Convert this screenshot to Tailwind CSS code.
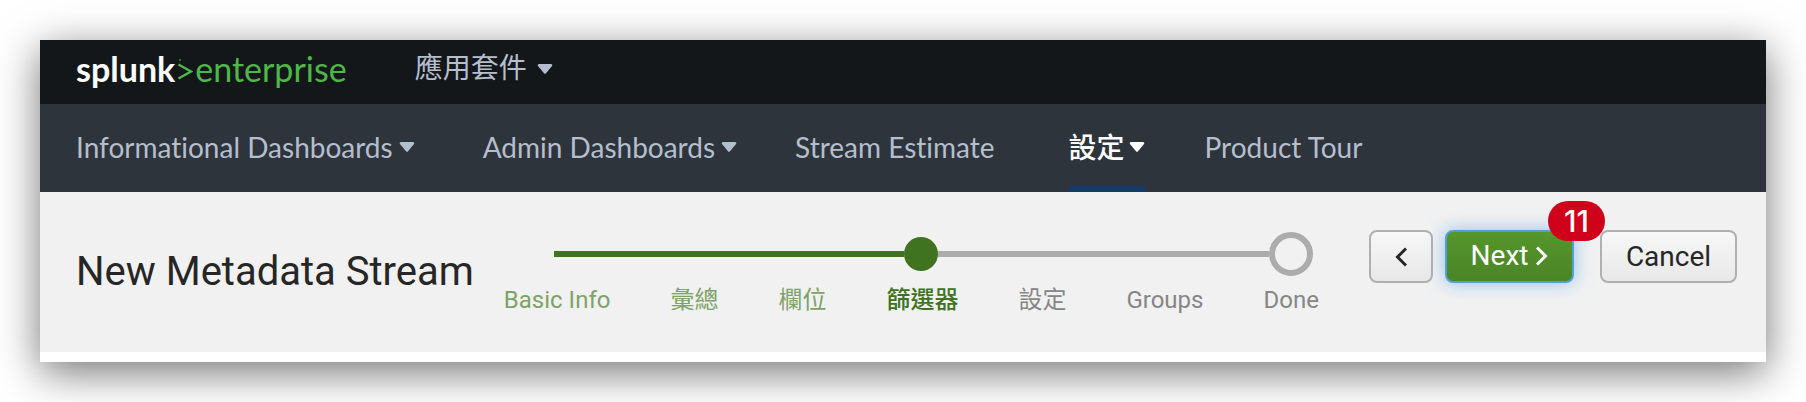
<!DOCTYPE html>
<html lang="zh-Hant">
<head>
<meta charset="utf-8">
<meta name="viewport" content="width=device-width, initial-scale=1">
<title>New Metadata Stream</title>
<script src="https://cdn.jsdelivr.net/npm/@tailwindcss/browser@4"></script>
</head>
<body class="bg-white p-10 font-[Roboto,'Noto_Sans_CJK_TC',sans-serif]">
<div class="bg-white pb-2.5 shadow-[0_10px_40px_rgba(0,0,0,0.55)]">
  <header class="flex h-16 items-center bg-[#13171a] pl-9">
    <a href="#" aria-label="splunk enterprise" class="mr-[68px] flex items-center pb-1.5 text-[34px] leading-10 font-[Lato,sans-serif]">
      <span class="font-bold text-white">splunk</span>
      <svg class="mx-0.5 mt-1 h-6 w-4" viewBox="0 0 16 24" fill="none" stroke="#4fb648" stroke-width="2.5" aria-hidden="true"><path d="M1.500 5.500 14 12.500 1.500 19.500"/><path d="M2 1h2" stroke="#2f6c2c" stroke-width="2"/></svg>
      <span class="text-[#4fb648]">enterprise</span>
    </a>
    <button type="button" class="flex items-center gap-2.5 pb-1.5 text-[28px] leading-10 text-[#b5becd]">應用套件
      <svg class="h-2.5 w-4" viewBox="0 0 16 10" fill="currentColor" aria-hidden="true"><path d="M2 0h12q2 .5 1 2L9 9.300q-1 1-2 0L1 2Q0 .5 2 0z"/></svg>
    </button>
  </header>
  <nav class="flex h-22 items-stretch bg-[#2e343c] pl-9 text-[28px] leading-10 text-[#b5becd] font-[Lato,'Noto_Sans_CJK_TC',sans-serif] [font-variant-ligatures:none]">
    <button type="button" class="mr-[68px] flex items-center gap-1.5 pb-0.5">Informational Dashboards
      <svg class="h-2.5 w-4" viewBox="0 0 16 10" fill="currentColor" aria-hidden="true"><path d="M2 0h12q2 .5 1 2L9 9.300q-1 1-2 0L1 2Q0 .5 2 0z"/></svg>
    </button>
    <button type="button" class="mr-[58px] flex items-center gap-1.5 pb-0.5">Admin Dashboards
      <svg class="h-2.5 w-4" viewBox="0 0 16 10" fill="currentColor" aria-hidden="true"><path d="M2 0h12q2 .5 1 2L9 9.300q-1 1-2 0L1 2Q0 .5 2 0z"/></svg>
    </button>
    <a href="#" class="mr-[74px] flex items-center pb-0.5">Stream Estimate</a>
    <button type="button" class="mr-[60px] flex items-center gap-1 border-b-6 border-[#143c6b] pt-1 font-medium text-white">設定
      <svg class="h-2.5 w-4" viewBox="0 0 16 10" fill="currentColor" aria-hidden="true"><path d="M2 0h12q2 .5 1 2L9 9.300q-1 1-2 0L1 2Q0 .5 2 0z"/></svg>
    </button>
    <a href="#" class="flex items-center pb-0.5">Product Tour</a>
  </nav>
  <main class="flex h-40 items-start bg-[#f1f1f1] pr-[29px] pl-9">
    <h1 class="mt-[50px] mr-[30px] text-[40px] leading-[60px] whitespace-nowrap text-[#262626]">New Metadata Stream</h1>
    <div class="mt-10">
      <div class="flex items-center pr-1.5 pl-[50px]" aria-hidden="true">
        <span class="h-1.5 flex-[350] bg-[#3f7320]"></span>
        <span class="size-[34px] rounded-full bg-[#3f7320]"></span>
        <span class="h-1.5 flex-[330] bg-[#acacac]"></span>
        <span class="size-11 rounded-full border-6 border-[#acacac]"></span>
      </div>
      <ol class="mt-2 flex gap-[60px] text-2xl whitespace-nowrap text-[#868686]">
        <li class="text-[#7ea368]">Basic Info</li>
        <li class="text-[#7ea368]">彙總</li>
        <li class="text-[#7ea368]">欄位</li>
        <li class="font-medium text-[#3f7320]" aria-current="step">篩選器</li>
        <li>設定</li>
        <li>Groups</li>
        <li>Done</li>
      </ol>
    </div>
    <div class="mt-[38px] ml-auto flex text-[28px] leading-8 text-[#262626]">
      <button type="button" aria-label="Back" class="mr-3 flex h-[53px] w-16 items-center justify-center rounded-lg border-2 border-[#b0b0b0] bg-linear-to-b from-[#f7f7f7] to-[#e8e8e8]">
        <svg class="h-5 w-3" viewBox="0 0 12 20" fill="none" stroke="currentColor" stroke-width="3" aria-hidden="true"><path d="M11 1.500 2.500 10 11 18.500"/></svg>
      </button>
      <div class="relative mr-[26px]">
        <button type="button" class="flex h-[53px] w-[129px] items-center justify-center gap-2 rounded-lg border-2 border-[#4f9fd8] bg-linear-to-b from-[#56962c] to-[#4a8526] pb-0.5 text-white shadow-[0_0_18px_rgba(80,160,240,0.6)]">Next
          <svg class="h-5 w-3" viewBox="0 0 12 20" fill="none" stroke="currentColor" stroke-width="3" aria-hidden="true"><path d="M1 1.500 9.500 10 1 18.500"/></svg>
        </button>
        <span class="absolute -top-[29px] -right-[31px] flex h-10 w-[57px] items-center justify-center rounded-full bg-[#d0021b] text-[30px] font-medium text-white font-[Inter,sans-serif]">11</span>
      </div>
      <button type="button" class="h-[53px] w-[137px] rounded-lg border-2 border-[#b0b0b0] bg-linear-to-b from-[#f7f7f7] to-[#e8e8e8]">Cancel</button>
    </div>
  </main>
</div>
</body>
</html>
